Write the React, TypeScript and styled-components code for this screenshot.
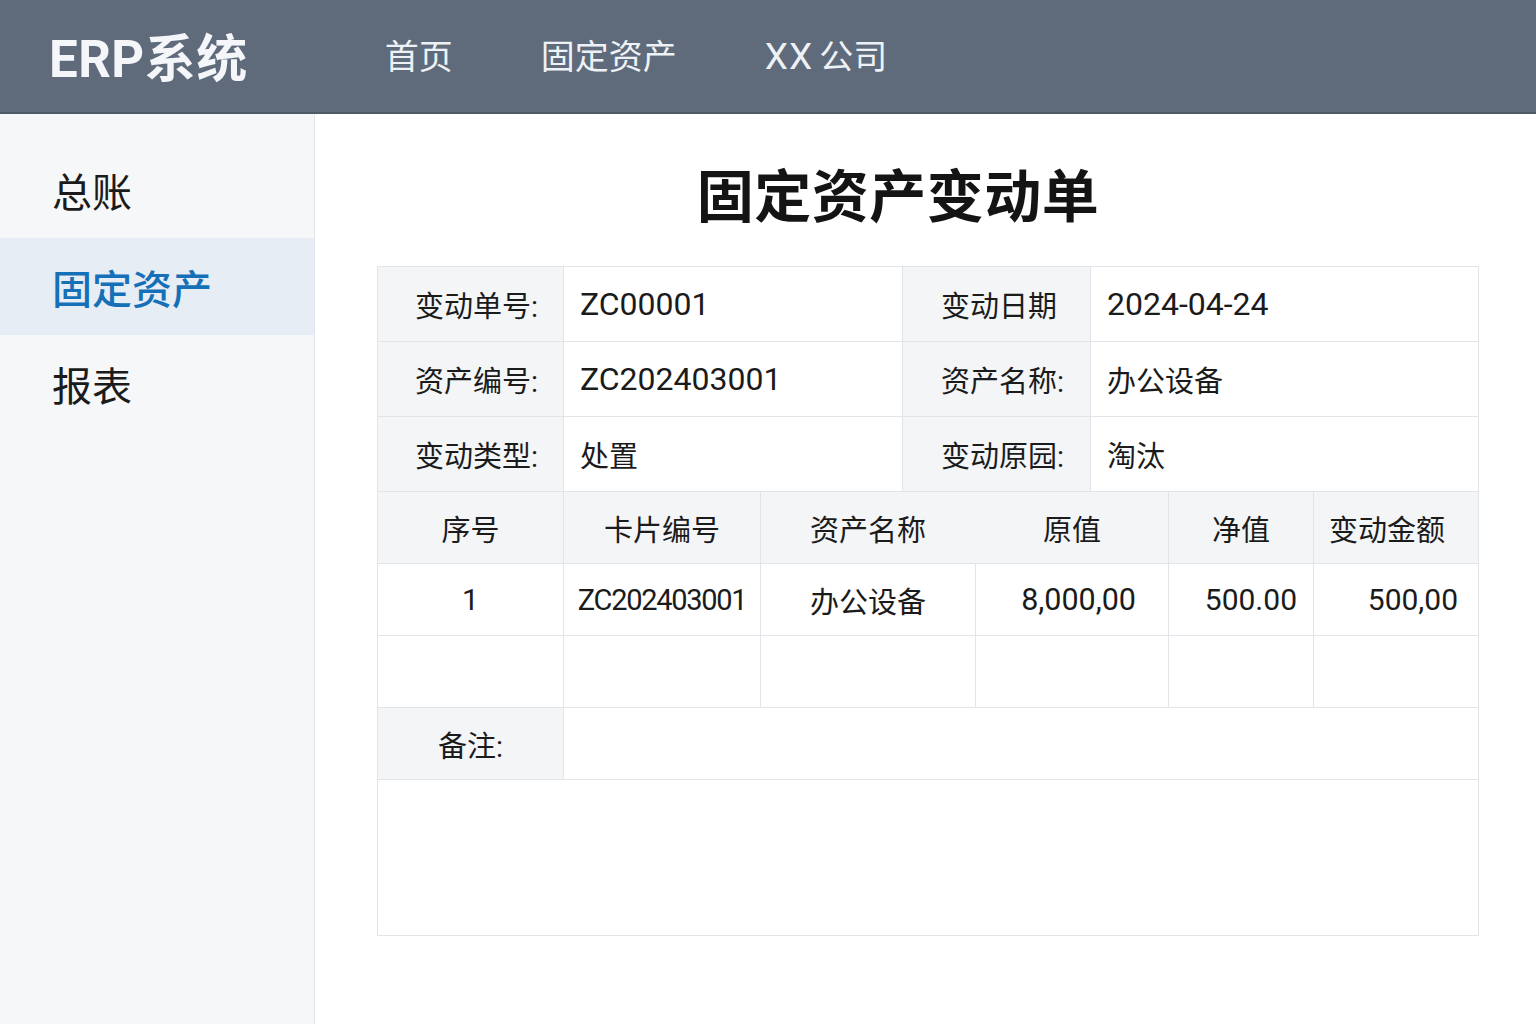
import React from "react";
import styled, { createGlobalStyle } from "styled-components";

const GlobalStyle = createGlobalStyle`
  html, body { margin: 0; padding: 0; background: #ffffff; }
  body { font-family: "Roboto", "Noto Sans CJK SC", sans-serif; color: #1b1b1b; }
  * { box-sizing: border-box; }
`;

const Page = styled.div`
  width: 1536px;
  height: 1024px;
  display: flex;
  flex-direction: column;
  overflow: hidden;
`;

const TopBar = styled.header`
  height: 114px;
  flex: none;
  background: #5f6b7b;
  border-bottom: 2px solid #4f5a68;
  display: flex;
  align-items: center;
  padding-left: 49px;
  padding-bottom: 3px;
  color: #f4f6f9;
`;

const Logo = styled.div`
  font-family: "Roboto", "Noto Sans CJK SC", sans-serif;
  font-weight: 700;
  font-size: 51px;
  letter-spacing: 0.5px;
  margin-right: 137px;
`;

const Nav = styled.nav`
  display: flex;
  align-items: baseline;
  gap: 88px;
`;

const NavItem = styled.span`
  font-size: 34px;
  font-weight: 400;
  color: #eef1f5;
`;

const NavLatin = styled.span`
  font-size: 37px;
  letter-spacing: 1px;
  margin-right: 6px;
`;

const Body = styled.div`
  flex: 1;
  display: flex;
  min-height: 0;
`;

const Sidebar = styled.aside`
  width: 315px;
  flex: none;
  background: #f5f7f9;
  border-right: 1px solid #e3e6ea;
  padding-top: 27px;
  display: flex;
  flex-direction: column;
`;

const SideItem = styled.div<{ $active?: boolean }>`
  height: 97px;
  display: flex;
  align-items: center;
  padding-left: 52px;
  font-size: 40px;
  color: ${(p) => (p.$active ? "#1670b8" : "#1b1b1b")};
  background: ${(p) => (p.$active ? "#e6edf4" : "transparent")};
  font-weight: ${(p) => (p.$active ? 500 : 400)};
`;

const Main = styled.main`
  flex: 1;
  padding: 47px 57px 0 62px;
  display: flex;
  flex-direction: column;
`;

const Title = styled.h1`
  margin: 0 0 32px;
  padding-right: 60px;
  text-align: center;
  font-size: 57px;
  line-height: 73px;
  font-weight: 700;
  color: #141414;
  letter-spacing: 0.5px;
`;

const Sheet = styled.div`
  width: 1102px;
  border-top: 1px solid #e1e4e8;
  border-left: 1px solid #e1e4e8;
`;

const InfoGrid = styled.div`
  display: grid;
  grid-template-columns: 186px 339px 188px 1fr;
  grid-auto-rows: 75px;
`;

const DetailGrid = styled.div`
  display: grid;
  grid-template-columns: 186px 197px 215px 193px 145px 1fr;
  grid-auto-rows: 72px;
`;

const RemarkGrid = styled.div`
  display: grid;
  grid-template-columns: 186px 1fr;
  grid-template-rows: 72px 156px;
`;

const Cell = styled.div<{
  $label?: boolean;
  $align?: "left" | "center" | "right";
  $pad?: number;
  $joinRight?: boolean;
  $tight?: boolean;
  $span?: number;
}>`
  display: flex;
  align-items: center;
  justify-content: ${(p) =>
    p.$align === "center" ? "center" : p.$align === "right" ? "flex-end" : "flex-start"};
  padding: ${(p) =>
    p.$align === "right"
      ? `0 ${p.$pad ?? 20}px 0 0`
      : p.$align === "center"
      ? `0 ${p.$pad ?? 0}px 0 0`
      : `0 0 0 ${p.$pad ?? 16}px`};
  background: ${(p) => (p.$label ? "#f3f5f7" : "#ffffff")};
  border-right: 1px solid ${(p) => (p.$joinRight ? "#f3f5f7" : "#e1e4e8")};
  border-bottom: 1px solid #e1e4e8;
  font-size: 29px;
  color: #1b1b1b;
  white-space: nowrap;
  letter-spacing: ${(p) => (p.$tight ? "-1.3px" : "0")};
  ${(p) => (p.$span ? `grid-column: span ${p.$span};` : "")}
`;

const Num = styled.span<{ $size: number }>`
  font-family: "Roboto", sans-serif;
  font-size: ${(p) => p.$size}px;
`;

const info: [string, string, boolean, string, string, boolean][] = [
  ["变动单号:", "ZC00001", true, "变动日期", "2024-04-24", true],
  ["资产编号:", "ZC202403001", true, "资产名称:", "办公设备", false],
  ["变动类型:", "处置", false, "变动原园:", "淘汰", false],
];

function Value({ text, latin }: { text: string; latin: boolean }) {
  return latin ? <Num $size={32}>{text}</Num> : <>{text}</>;
}

export default function App() {
  return (
    <Page>
      <GlobalStyle />
      <TopBar>
        <Logo>ERP系统</Logo>
        <Nav>
          <NavItem>首页</NavItem>
          <NavItem>固定资产</NavItem>
          <NavItem>
            <NavLatin>XX</NavLatin>公司
          </NavItem>
        </Nav>
      </TopBar>
      <Body>
        <Sidebar>
          <SideItem>总账</SideItem>
          <SideItem $active>固定资产</SideItem>
          <SideItem>报表</SideItem>
        </Sidebar>
        <Main>
          <Title>固定资产变动单</Title>
          <Sheet>
            <InfoGrid>
              {info.map((r) => (
                <React.Fragment key={r[0]}>
                  <Cell $label $pad={37}>{r[0]}</Cell>
                  <Cell $pad={16}>
                    <Value text={r[1]} latin={r[2]} />
                  </Cell>
                  <Cell $label $pad={38}>{r[3]}</Cell>
                  <Cell $pad={16}>
                    <Value text={r[4]} latin={r[5]} />
                  </Cell>
                </React.Fragment>
              ))}
            </InfoGrid>
            <DetailGrid>
              <Cell $label $align="center">序号</Cell>
              <Cell $label $align="center">卡片编号</Cell>
              <Cell $label $align="center" $joinRight>资产名称</Cell>
              <Cell $label $align="center">原值</Cell>
              <Cell $label $align="center">净值</Cell>
              <Cell $label $align="center" $pad={18}>变动金额</Cell>

              <Cell $align="center"><Num $size={30}>1</Num></Cell>
              <Cell $align="center" $tight>ZC202403001</Cell>
              <Cell $align="center">办公设备</Cell>
              <Cell $align="right" $pad={32}><Num $size={30.5}>8,000,00</Num></Cell>
              <Cell $align="right" $pad={16}><Num $size={30}>500.00</Num></Cell>
              <Cell $align="right" $pad={20}><Num $size={30}>500,00</Num></Cell>

              <Cell />
              <Cell />
              <Cell />
              <Cell />
              <Cell />
              <Cell />
            </DetailGrid>
            <RemarkGrid>
              <Cell $label $align="center">备注:</Cell>
              <Cell />
              <Cell $span={2} />
            </RemarkGrid>
          </Sheet>
        </Main>
      </Body>
    </Page>
  );
}
